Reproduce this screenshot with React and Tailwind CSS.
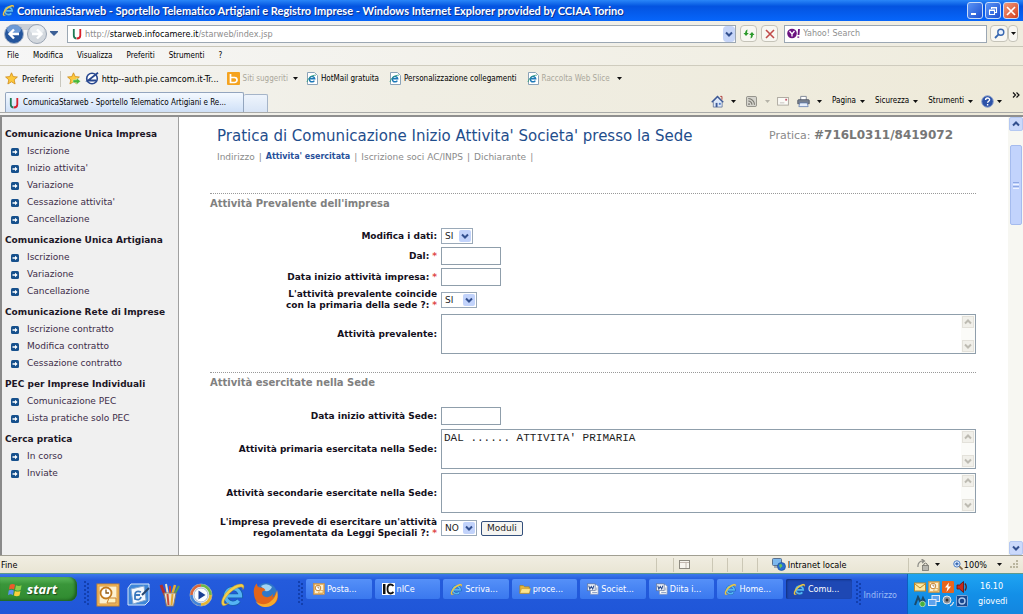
import React from "react";

const ui = "font-['DejaVu_Sans_Condensed','DejaVu_Sans',sans-serif]";

/* ---------- icons ---------- */

function IELogo({ className }) {
  return (
    <svg viewBox="0 0 24 24" className={className} aria-hidden="true">
      <path d="M6.500 12.800H19A6.800 6.800 0 1 0 17.300 17.300" fill="none" stroke="#1560ab" strokeWidth="4.600" />
      <path d="M6.500 12.800H18.800A6.800 6.800 0 1 0 17.200 17.200" fill="none" stroke="#55b4f4" strokeWidth="3.200" />
      <path d="M2.300 21.500C-.5 18.500 4 9.500 11 5c5.500-3.600 10.500-4 11-1.300.2 1-.2 2.200-.9 3.300.2-1.600-.3-2.500-2-2.400-2.600.1-6.300 2-9.600 5.200C5 14 2.700 18.500 4.200 19.900c.7.700 2.300.3 4-.6-2.300 2-4.800 3.200-5.900 2.200z" fill="#f3cf4a" stroke="#c2941c" strokeWidth=".4" />
    </svg>
  );
}

function UMark() {
  return (
    <svg viewBox="0 0 10 12" className="h-3 w-2.5 shrink-0" aria-hidden="true">
      <path d="M1.800 1v6.500c0 2 .8 2.800 2.600 3" fill="none" stroke="#1f7a55" strokeWidth="1.800" />
      <path d="M8.300 1v6.500c0 2-1.200 3-3.600 3" fill="none" stroke="#d8202b" strokeWidth="1.800" />
    </svg>
  );
}

function Caret({ dim }) {
  return (
    <svg viewBox="0 0 5 3" className="h-[3px] w-[5px] shrink-0" aria-hidden="true">
      <path d="M0 0h5L2.500 3z" fill={dim ? "#b5b3a8" : "#111"} />
    </svg>
  );
}

function Star({ arrow }) {
  return (
    <svg viewBox="0 0 14 13" className="h-[13px] w-3.5 shrink-0" aria-hidden="true">
      <path d="M6.500.8l1.700 3.800 4.200.4-3.200 2.800.9 4.200-3.600-2.200L2.900 12l.9-4.200L.6 5l4.200-.4z" fill="#fdc93c" stroke="#cf8a17" strokeWidth=".8" />
      {arrow && <path d="M6 7.800h3.600V6l4 3.300-4 3.300v-1.900H6z" fill="#46b838" stroke="#fff" strokeWidth=".4" />}
    </svg>
  );
}

function PageIcon() {
  return (
    <svg viewBox="0 0 12 13" className="h-[13px] w-3 shrink-0" aria-hidden="true">
      <path d="M1.500.5h7l3 3v9h-10z" fill="#fff" stroke="#8ba3b8" />
      <path d="M8.300 8.600A2.700 2.700 0 1 1 8.700 6.800H4" fill="none" stroke="#1c78b8" strokeWidth="1.500" />
      <path d="M1 10C2 6 6 3 9.800 3.200" fill="none" stroke="#2e9a78" strokeWidth=".9" />
    </svg>
  );
}

function Chevron({ up, color = "#33508f" }) {
  return (
    <svg viewBox="0 0 8 6" className="h-1.5 w-2" aria-hidden="true">
      <path d={up ? "M1 4.500l3-3 3 3" : "M1 1.500l3 3 3-3"} fill="none" stroke={color} strokeWidth="2" />
    </svg>
  );
}

function Bullet() {
  return (
    <svg viewBox="0 0 8 8" className="h-2 w-2 shrink-0" aria-hidden="true">
      <rect width="8" height="8" rx="1.500" fill="#16508c" />
      <path d="M1.500 3.300H4V1.800L6.600 4 4 6.200V4.700H1.500z" fill="#fff" />
    </svg>
  );
}

function Outlook({ className }) {
  return (
    <svg viewBox="0 0 24 24" className={className} aria-hidden="true">
      <rect x="1" y="1" width="22" height="22" fill="#f6c468" stroke="#c9822a" />
      <rect x="3" y="3" width="18" height="18" fill="#fdf0cf" stroke="#dd9a3c" />
      <circle cx="10" cy="10" r="5.500" fill="#fff" stroke="#c27a1f" strokeWidth="1.800" />
      <path d="M10 6.500V10h3" fill="none" stroke="#8a5716" strokeWidth="1.300" />
      <path d="M13 15h7v5h-9z" fill="#fff2c0" stroke="#c9822a" />
    </svg>
  );
}

function Word() {
  return (
    <svg viewBox="0 0 14 14" className="h-3 w-3 shrink-0" aria-hidden="true">
      <path d="M4 2h7l2 2v9H4z" fill="#fff" stroke="#8090b0" strokeWidth=".8" />
      <path d="M10.500 6H12M10.500 8H12M6 11h6" stroke="#5572a8" strokeWidth=".8" />
      <rect x=".5" y="1" width="9" height="8" fill="#eef3fb" stroke="#5a6f98" strokeWidth=".8" />
      <path d="M2 3l1.300 4L5 4l1.700 3L8 3" fill="none" stroke="#27498c" strokeWidth="1.200" />
    </svg>
  );
}

function Folder() {
  return (
    <svg viewBox="0 0 14 14" className="h-3 w-3 shrink-0" aria-hidden="true">
      <path d="M1 3h4l1.500 1.500H12V12H1z" fill="#e7b73c" stroke="#a87a16" strokeWidth=".7" />
      <path d="M3 6.500h10.500L12 12H1z" fill="#fde58c" stroke="#b98e25" strokeWidth=".6" />
    </svg>
  );
}

function Nice() {
  return (
    <svg viewBox="0 0 13 12" className="h-3 w-[13px] shrink-0" aria-hidden="true">
      <rect width="13" height="12" fill="#fff" />
      <rect x="1" y="1" width="2.500" height="10" fill="#111" />
      <path d="M11.500 3C10.500 1.800 9.500 1.500 8.500 1.500 6.500 1.500 5.500 3.300 5.500 6s1 4.500 3 4.500c1 0 2-.5 3-1.500" fill="none" stroke="#111" strokeWidth="1.800" />
    </svg>
  );
}

function Grip() {
  return (
    <svg viewBox="0 0 6 26" className="h-[26px] w-1.5 shrink-0" aria-hidden="true">
      {[1, 5, 9, 13, 17, 21].map((y) => (
        <g key={y} fill="#123fae">
          <rect x="0" y={y} width="2" height="2" />
          <rect x="3" y={y + 2} width="2" height="2" />
        </g>
      ))}
    </svg>
  );
}

/* ---------- browser chrome ---------- */

function TitleBar() {
  const box = "flex h-[17px] w-4 items-center justify-center rounded-[3px] border border-[#c9dcf8]";
  return (
    <header className="flex h-[21px] items-center bg-linear-to-b from-[#2a86f8] via-[#0453e0] via-30% to-[#0766fb] pr-1 pl-0.5">
      <IELogo className="h-[13px] w-[13px] shrink-0" />
      <h1 className="ml-0.5 flex-1 truncate font-['Lato','Open_Sans',sans-serif] text-[11px] leading-4 font-bold text-white [text-shadow:1px_1px_0_#0a2f8c]">
        ComunicaStarweb - Sportello Telematico Artigiani e Registro Imprese - Windows Internet Explorer provided by CCIAA Torino
      </h1>
      <div className="flex gap-0.5">
        <button aria-label="Riduci a icona" className={`${box} bg-linear-to-br from-[#5a93f5] to-[#1f4fd0]`}>
          <svg viewBox="0 0 10 10" className="h-2.5 w-2.5"><path d="M1 8h5" stroke="#fff" strokeWidth="2" /></svg>
        </button>
        <button aria-label="Ripristina" className={`${box} bg-linear-to-br from-[#5a93f5] to-[#1f4fd0]`}>
          <svg viewBox="0 0 10 10" className="h-2.5 w-2.5"><path d="M3.500 3V1.500h5v5H7M1.500 4h5v4.500h-5zM1.500 4.500h5M3.500 2h5" fill="none" stroke="#fff" strokeWidth="1.100" /></svg>
        </button>
        <button aria-label="Chiudi" className={`${box} bg-linear-to-br from-[#f09a7c] to-[#d23a14]`}>
          <svg viewBox="0 0 10 10" className="h-2.5 w-2.5"><path d="M1 1l8 8M9 1L1 9" stroke="#fff" strokeWidth="1.700" /></svg>
        </button>
      </div>
    </header>
  );
}

function NavRow() {
  const btn = "flex h-[17px] items-center justify-center rounded-sm border border-[#c5c3b8] bg-[#f8f7f2]";
  return (
    <div className="flex h-[26px] items-center border-b border-[#c9c6b8] bg-linear-to-r from-[#f4f4f5] to-[#efecdf] pr-[5px] pl-1">
      <svg viewBox="0 0 46 22" className="h-[22px] w-[46px] shrink-0" role="img" aria-label="Indietro e avanti">
        <path d="M10 1h25v6H10z" fill="#c9ced6" />
        <circle cx="10" cy="11" r="9.500" fill="#24559d" stroke="#a9b6c9" />
        <ellipse cx="10" cy="6.500" rx="7" ry="4.500" fill="#6d9ad6" />
        <path d="M15 11H6M10 6.500L5.500 11l4.500 4.500" fill="none" stroke="#fff" strokeWidth="2.400" />
        <circle cx="33" cy="11" r="9.500" fill="#d3d8de" stroke="#9aa4b3" />
        <ellipse cx="33" cy="7" rx="7" ry="4.500" fill="#e6eaee" />
        <path d="M28 11h9M33 6.500l4.500 4.500-4.500 4.500" fill="none" stroke="#fff" strokeWidth="2.400" />
      </svg>
      <svg viewBox="0 0 8 5" className="h-[5px] w-2 shrink-0"><path d="M0 0h8v1L4 5 0 1z" fill="#3c5f96" /></svg>
      <div className="ml-[9px] flex h-[18px] flex-1 items-center border border-[#9ba7b3] bg-white pl-1">
        <UMark />
        <div role="textbox" aria-label="Indirizzo" tabIndex={0} className={`${ui} ml-[3px] flex-1 text-[9px] leading-3 text-[#8c8c8c]`}>
          http://<span className="text-black">starweb.infocamere.it</span>/starweb/index.jsp
        </div>
        <button aria-label="Cronologia indirizzi" className="flex h-4 w-3 items-center justify-center rounded-sm bg-[#c6d5f8]"><Chevron /></button>
      </div>
      <button aria-label="Aggiorna" className={`${btn} ml-1 w-[17px]`}>
        <svg viewBox="0 0 12 10" className="h-2.5 w-3"><path d="M4.500.5L4 4h1.800L3 7 .5 4h1.600C2 2.500 3 1 4.500.5zM7.500 9.500L8 6H6.200L9 3l2.500 3H9.900C10 7.500 9 9 7.500 9.500z" fill="#2c9a2c" /></svg>
      </button>
      <button aria-label="Interrompi" className={`${btn} ml-1 w-[17px]`}>
        <svg viewBox="0 0 10 10" className="h-2.5 w-2.5"><path d="M1 1l8 8M9 1L1 9" stroke="#c04a4a" strokeWidth="1.600" /></svg>
      </button>
      <div className="ml-1.5 flex h-[18px] w-1/5 items-center border border-[#9ba7b3] bg-white pl-0.5">
        <svg viewBox="0 0 14 11" className="h-[11px] w-3.5 shrink-0">
          <circle cx="5" cy="5.500" r="4.800" fill="#6b1280" />
          <path d="M2.500 3L5 6l2.500-3M5 6v2.500" fill="none" stroke="#fff" strokeWidth="1.300" />
          <path d="M12 1l-.5 6M11.300 8.500v1.300" stroke="#6b1280" strokeWidth="1.800" />
        </svg>
        <input aria-label="Cerca" placeholder="Yahoo! Search" className="ml-0.5 w-full min-w-0 font-['DejaVu_Sans',sans-serif] text-[8px] leading-3 outline-none placeholder:text-[#8f8f8f]" />
      </div>
      <button aria-label="Avvia ricerca" className={`${btn} ml-[3px] w-[18px]`}>
        <svg viewBox="0 0 11 11" className="h-[11px] w-[11px]"><circle cx="6.800" cy="4.200" r="3" fill="#eaf2fd" stroke="#3767b0" strokeWidth="1.400" /><path d="M4.600 6.400L1 10" stroke="#3767b0" strokeWidth="1.800" /></svg>
      </button>
      <button aria-label="Opzioni di ricerca" className={`${btn} w-2.5`}><Caret /></button>
    </div>
  );
}

function MenuRow() {
  return (
    <nav className={`${ui} flex h-[19px] items-center gap-3.5 border-b border-[#cfccbe] bg-linear-to-r from-[#f6f6f6] to-[#efecdd] pl-[7px] text-[8px] leading-3 text-black`}>
      {["File", "Modifica", "Visualizza", "Preferiti", "Strumenti", "?"].map((m) => <button key={m}>{m}</button>)}
    </nav>
  );
}

function FavoritesRow() {
  const item = "flex shrink-0 items-center gap-[3px]";
  return (
    <div className={`${ui} flex h-[25px] items-center pl-[5px] text-[8px] leading-3 text-black`}>
      <button className={`${item} text-[9px]`}><Star />Preferiti</button>
      <span className="mx-1.5 h-4 w-px bg-[#c9c7bd]" />
      <button aria-label="Aggiungi alla barra Preferiti"><Star arrow /></button>
      <a href="#auth" className={`${item} ml-1`}>
        <svg viewBox="0 0 14 13" className="h-[13px] w-3.5"><circle cx="7" cy="6.500" r="5.300" fill="#fff" stroke="#27478f" strokeWidth="1.600" /><path d="M13 .8L3 8.500h8" fill="none" stroke="#27478f" strokeWidth="1.800" /></svg>
        <span className="text-[9px]">http--auth.pie.camcom.it-Tr...</span>
      </a>
      <a href="#siti" className={`${item} ml-2 text-[#aaa79b]`}>
        <svg viewBox="0 0 13 13" className="h-[13px] w-[13px]"><rect width="13" height="13" rx="1" fill="#f5a31f" /><path d="M3.500 2v8.500h4a2.500 2.500 0 0 0 0-5h-4" fill="none" stroke="#fff" strokeWidth="1.700" /></svg>
        Siti suggeriti<span className="ml-0.5"><Caret /></span>
      </a>
      <a href="#hotmail" className={`${item} ml-2`}><PageIcon />HotMail gratuita</a>
      <a href="#pers" className={`${item} ml-2.5`}><PageIcon />Personalizzazione collegamenti</a>
      <a href="#slice" className={`${item} ml-2.5 text-[#aaa79b]`}><PageIcon />Raccolta Web Slice<span className="ml-1"><Caret /></span></a>
    </div>
  );
}

function TabRow() {
  const item = "flex items-center gap-1";
  return (
    <div className={`${ui} flex h-[22px] items-end border-b border-[#a9aaa8] pl-[5px] text-[8px] leading-3 text-black`}>
      <button className="flex h-5 w-[239px] items-center gap-1 rounded-t-xs border border-b-0 border-[#93a5be] bg-linear-to-b from-[#f4f9ff] to-[#cfe0f7] pl-[3px] whitespace-nowrap">
        <UMark />ComunicaStarweb - Sportello Telematico Artigiani e Re...
      </button>
      <button aria-label="Nuova scheda" className="h-[18px] w-6 rounded-t-xs border border-b-0 border-l-0 border-[#a5b4c8] bg-linear-to-b from-[#eef4fc] to-[#d9e5f6]" />
      <div className="ml-auto flex h-[22px] items-center pr-[3px]">
        <button aria-label="Pagina iniziale" className="mr-2.5 flex items-center gap-[7px]">
          <svg viewBox="0 0 14 14" className="h-[13px] w-[13px]"><path d="M2.500 7v6h9.500V7L7 2z" fill="#dde8f8" stroke="#566a92" strokeWidth=".8" /><path d="M.8 7.800L7 1.500l6.200 6.300" fill="none" stroke="#3d5996" strokeWidth="1.500" /><path d="M10 1.500h1.800V5" fill="none" stroke="#a33" strokeWidth="1" /><path d="M5 8.500h2V13H5z" fill="#3d5996" /><path d="M8.500 8.500h2v2h-2z" fill="#4d79c8" /></svg>
          <Caret />
        </button>
        <button aria-label="Feed" className="mr-[7px] flex items-center gap-2">
          <svg viewBox="0 0 12 12" className="h-[11px] w-[11px]"><rect x=".5" y=".5" width="11" height="11" rx="1.500" fill="#d5d4cd" stroke="#8b8a83" /><circle cx="3.300" cy="8.800" r="1" fill="#77766f" /><path d="M2.500 5.500a4 4 0 0 1 4 4M2.500 2.800a6.800 6.800 0 0 1 6.800 6.700" fill="none" stroke="#77766f" strokeWidth="1.200" /></svg>
          <Caret dim />
        </button>
        <button aria-label="Leggi posta" className="mr-2">
          <svg viewBox="0 0 13 10" className="h-[9px] w-3"><rect x=".5" y=".5" width="12" height="8.500" fill="#fbfaf6" stroke="#a9a59c" /><rect x="9" y="2" width="2" height="2" fill="#c4566a" /><path d="M3 6.500h5" stroke="#c3c0ba" /></svg>
        </button>
        <button aria-label="Stampa" className="mr-2.5 flex items-center gap-[7px]">
          <svg viewBox="0 0 14 13" className="h-[13px] w-[13px]"><path d="M4 5V1h6v4" fill="#fff" stroke="#7c8494" /><path d="M.8 5.500q0-1 1-1h10.400q1 0 1 1V9H.8z" fill="#77808f" stroke="#454d5c" strokeWidth=".8" /><path d="M3 8h8l1 4H2z" fill="#e6eefb" stroke="#5c78ad" strokeWidth=".8" /></svg>
          <Caret />
        </button>
        <div className="mr-2 flex gap-2.5">
          {["Pagina", "Sicurezza", "Strumenti"].map((t) => <button key={t} className={item}>{t}<Caret /></button>)}
        </div>
        <button aria-label="Guida" className="mr-2.5 flex items-center gap-[3px]">
          <svg viewBox="0 0 13 13" className="h-[13px] w-[13px]"><circle cx="6.500" cy="6.500" r="5.800" fill="#2c52a8" stroke="#8fa3cc" /><path d="M4.600 5c0-2.600 4-2.500 4-.2 0 1.500-2 1.500-2 3M6.600 9v1.400" fill="none" stroke="#fff" strokeWidth="1.400" /></svg>
          <Caret />
        </button>
        <button aria-label="Altri comandi" className="self-start">
          <svg viewBox="0 0 8 6" className="mt-0.5 h-1.5 w-2"><path d="M1 .5L3.500 3 1 5.500M4.500.5L7 3 4.500 5.500" fill="none" stroke="#111" strokeWidth="1.200" /></svg>
        </button>
      </div>
    </div>
  );
}

/* ---------- page ---------- */

const MENU = [
  ["Comunicazione Unica Impresa", ["Iscrizione", "Inizio attivita'", "Variazione", "Cessazione attivita'", "Cancellazione"]],
  ["Comunicazione Unica Artigiana", ["Iscrizione", "Variazione", "Cancellazione"]],
  ["Comunicazione Rete di Imprese", ["Iscrizione contratto", "Modifica contratto", "Cessazione contratto"]],
  ["PEC per Imprese Individuali", ["Comunicazione PEC", "Lista pratiche solo PEC"]],
  ["Cerca pratica", ["In corso", "Inviate"]],
];

function Sidebar() {
  return (
    <aside className="w-[179px] shrink-0 border-r border-l-2 border-r-[#a0a0a0] border-l-[#8a8a8a] bg-[#f0f0f0] pt-[9px] pl-[3px] text-[9px] leading-[17px]">
      {MENU.map(([title, items]) => (
        <section key={title} className="mb-1">
          <h2 className="font-bold whitespace-nowrap text-[#1c1626]">{title}</h2>
          <ul>
            {items.map((t) => (
              <li key={t}><a href="#pratica" className="flex items-center gap-2 pl-1.5 text-[#3c2c48]"><Bullet />{t}</a></li>
            ))}
          </ul>
        </section>
      ))}
    </aside>
  );
}

function Row({ id, label, required, children }) {
  const lines = label.split("\n");
  return (
    <div className="flex items-center gap-1">
      <label htmlFor={id} className="flex w-[227px] shrink-0 flex-col items-end text-[9px] leading-[11px] font-bold text-[#14101c]">
        {lines.map((line, i) => (
          <span key={line} className="flex gap-[3px]">
            <span>{line}</span>
            {required && i === lines.length - 1 && <span className="text-[#e04848]">*</span>}
          </span>
        ))}
      </label>
      {children}
    </div>
  );
}

function Select({ id, value, wide }) {
  return (
    <div className={`relative h-4 ${wide ? "w-9" : "w-8"}`}>
      <select id={id} defaultValue={value} className="block h-full w-full appearance-none border border-[#9aa9b8] bg-white pl-[3px] text-[9px] leading-3 text-[#222]">
        <option>SI</option>
        <option>NO</option>
      </select>
      <span className="pointer-events-none absolute top-0.5 right-0.5 flex h-3 w-3 items-center justify-center rounded-xs bg-[#c2d3fb]"><Chevron /></span>
    </div>
  );
}

function DateInput({ id }) {
  return <input id={id} className="h-[18px] w-[60px] border border-[#8f9eab] bg-white px-0.5 text-[9px]" />;
}

function Area({ id, value = "" }) {
  const arrow = "flex h-3 w-3 items-center justify-center border border-[#e3e1da] bg-[#f1f0ea]";
  return (
    <div className="flex h-10 flex-1 border border-[#8f9eab] bg-white">
      <textarea id={id} defaultValue={value} className="flex-1 resize-none overflow-hidden px-0.5 pt-0.5 font-['Liberation_Mono',monospace] text-[11px] leading-3 text-[#222]" />
      <div className="flex flex-col justify-between bg-[#fbfbf8] p-px">
        <span className={arrow}><Chevron up color="#bdbbb2" /></span>
        <span className={arrow}><Chevron color="#bdbbb2" /></span>
      </div>
    </div>
  );
}

function Section({ title, children }) {
  return (
    <section className="border-t border-dotted border-[#999]">
      <h3 className="text-[10px] leading-5 font-bold text-[#808080]">{title}</h3>
      {children}
    </section>
  );
}

function Scrollbar() {
  const b = "flex h-[14px] w-3.5 items-center justify-center rounded-xs border border-[#b4c8f2] bg-[#cbd9fb]";
  return (
    <div className="flex w-[15px] shrink-0 flex-col items-center bg-[#f7f7f2]">
      <button aria-label="Scorri su" className={b}><Chevron up /></button>
      <div className="mt-3.5 flex h-20 w-3 flex-col items-center justify-center gap-px rounded-xs border border-[#a5bbee] bg-[#c2d3fc]">
        <span className="h-px w-1.5 bg-[#8ea8e4]" />
        <span className="h-px w-1.5 bg-[#eef3ff]" />
        <span className="h-px w-1.5 bg-[#8ea8e4]" />
        <span className="h-px w-1.5 bg-[#eef3ff]" />
      </div>
      <button aria-label="Scorri giù" className={`${b} mt-auto`}><Chevron /></button>
    </div>
  );
}

function Page() {
  return (
    <div className="flex flex-1 border-t-2 border-[#8f8f8f] bg-white font-['DejaVu_Sans',sans-serif]">
      <Sidebar />
      <main className="flex-1 pt-2 pr-8 pb-4 pl-[31px]">
        <div className="flex items-center justify-between pr-[23px] pl-[7px] whitespace-nowrap">
          <h2 className="text-[15px] leading-5 text-[#1f4e8c]">Pratica di Comunicazione Inizio Attivita' Societa' presso la Sede</h2>
          <p className="text-[11px] leading-5 text-[#8a8a8a]">Pratica: <b className="text-[12px] text-[#777]">#716L0311/8419072</b></p>
        </div>
        <nav className="mt-[5px] mb-[30px] flex gap-1 pl-[7px] text-[9px] leading-3 text-[#8a8a8a]">
          <a href="#indirizzo">Indirizzo</a>|
          <a href="#attivita" className="text-[8px] font-bold text-[#27509a]">Attivita' esercitata</a>|
          <a href="#soci">Iscrizione soci AC/INPS</a>|
          <a href="#dichiarante">Dichiarante</a>|
        </nav>
        <Section title="Attività Prevalente dell'impresa">
          <div className="mt-3.5 mb-[18px] flex flex-col gap-[3px]">
            <Row id="mod" label="Modifica i dati:"><Select id="mod" value="SI" /></Row>
            <Row id="dal" label="Dal:" required><DateInput id="dal" /></Row>
            <Row id="inizio" label="Data inizio attività impresa:" required><DateInput id="inizio" /></Row>
            <Row id="coincide" label={"L'attività prevalente coincide\ncon la primaria della sede ?:"} required><Select id="coincide" value="SI" wide /></Row>
            <Row id="prev" label="Attività prevalente:"><Area id="prev" /></Row>
          </div>
        </Section>
        <Section title="Attività esercitate nella Sede">
          <div className="mt-3.5 flex flex-col gap-1">
            <Row id="sede" label="Data inizio attività Sede:"><DateInput id="sede" /></Row>
            <Row id="prim" label="Attività primaria esercitata nella Sede:"><Area id="prim" value="DAL ...... ATTIVITA' PRIMARIA" /></Row>
            <Row id="sec" label="Attività secondarie esercitate nella Sede:"><Area id="sec" /></Row>
            <Row id="leggi" label={"L'impresa prevede di esercitare un'attività\nregolamentata da Leggi Speciali ?:"} required>
              <Select id="leggi" value="NO" wide />
              <button className="h-[15px] rounded-xs border border-[#34507c] bg-[#f5f5f2] px-[5px] text-[9px] leading-3 text-[#222]">Moduli</button>
            </Row>
          </div>
        </Section>
      </main>
      <Scrollbar />
    </div>
  );
}

/* ---------- bottom bars ---------- */

function StatusBar() {
  const sep = "h-3.5 w-px bg-[#cbc7b5]";
  return (
    <div className={`${ui} flex h-[18px] items-center border-t border-[#a19f92] bg-linear-to-b from-[#f1eee2] to-[#e9e5d4] pr-1 pl-px text-[9px] leading-3 text-black`}>
      <span className="flex-1">Fine</span>
      <span className={sep} />
      <span className={`${sep} ml-4`} />
      <svg viewBox="0 0 11 9" className="ml-[5px] h-[9px] w-[11px]"><rect x=".5" y=".5" width="10" height="8" fill="#f7f5ee" stroke="#8e8b80" /><path d="M1 2.500h9M7 3v5" stroke="#b5a9a0" strokeWidth=".8" /></svg>
      <span className={`${sep} ml-[22px]`} />
      <span className={`${sep} ml-3.5`} />
      <span className={`${sep} ml-3.5`} />
      <span className={`${sep} ml-3.5`} />
      <svg viewBox="0 0 14 13" className="mr-0.5 ml-3.5 h-[13px] w-3.5"><rect x=".5" y=".5" width="9" height="7" rx="1" fill="#7db8ee" stroke="#59708f" /><path d="M2 9h6" stroke="#8795a8" strokeWidth="1.500" /><circle cx="9.500" cy="8.500" r="4" fill="#2a6fd0" stroke="#154a96" strokeWidth=".6" /><path d="M7 7q2-2 3 0t-1 2q0 2-1 1z" fill="#65c45a" /></svg>
      <span className="w-[120px]">Intranet locale</span>
      <span className={sep} />
      <button aria-label="Modalità protetta" className="ml-2 flex items-center gap-[5px]">
        <svg viewBox="0 0 13 12" className="h-3 w-[13px]"><path d="M1 8c-.5-4 2-6.500 6-6M4.500 0L7.500 2 5 4" fill="none" stroke="#8b8b85" strokeWidth="1.200" /><rect x="5.500" y="6.500" width="6" height="5" fill="#b7b6af" stroke="#77766f" strokeWidth=".8" /><path d="M6.800 6.500V5q1.700-1.800 3.400 0v1.500" fill="none" stroke="#77766f" /></svg>
        <Caret />
      </button>
      <button className="ml-[13px] flex items-center gap-px">
        <svg viewBox="0 0 11 11" className="h-2.5 w-2.5"><circle cx="4.300" cy="4.300" r="3.500" fill="#e3f0fd" stroke="#3a6fc0" /><path d="M2.500 4.300h3.600M4.300 2.500v3.600" stroke="#2457a8" strokeWidth="1.200" /><path d="M7 7l3.500 3.500" stroke="#846a4a" strokeWidth="1.800" /></svg>
        100%<span className="ml-[9px]"><Caret /></span>
      </button>
      <svg viewBox="0 0 9 9" className="ml-2 h-[9px] w-[9px]"><path d="M6 0h2v2H6zM3 3h2v2H3zM6 3h2v2H6zM0 6h2v2H0zM3 6h2v2H3zM6 6h2v2H6z" fill="#bab69f" /></svg>
    </div>
  );
}

const TASKS = [
  ["Posta...", <Outlook className="h-3 w-3 shrink-0" />],
  ["nICe", <Nice />],
  ["Scriva...", <IELogo className="h-[13px] w-[13px] shrink-0" />],
  ["proce...", <Folder />],
  ["Societ...", <Word />],
  ["Diita i...", <Word />],
  ["Home...", <IELogo className="h-[13px] w-[13px] shrink-0" />],
  ["Comu...", <IELogo className="h-[13px] w-[13px] shrink-0" />],
];

function QuickLaunch() {
  return (
    <div className="mt-2 mr-[19px] ml-1.5 flex gap-[7px]">
      <button aria-label="Outlook"><Outlook className="h-6 w-6" /></button>
      <button aria-label="Mostra desktop">
        <svg viewBox="0 0 24 24" className="h-6 w-6"><path d="M4 1h18v17l-4 4H1V5z" fill="#3f87d8" stroke="#d8e8fa" /><path d="M4 6l13-3 2 14-13 4z" fill="#f4f8fd" stroke="#86a8d0" /><path d="M14 9q-6-2-6 3v4q5 2 6-2M8 12h5" fill="none" stroke="#3a78bd" strokeWidth="1.800" /><path d="M22 5l-7 7" stroke="#26456e" strokeWidth="2" /></svg>
      </button>
      <button aria-label="Grafica">
        <svg viewBox="0 0 24 24" className="h-6 w-6"><path d="M7 12L3 2" stroke="#b03030" strokeWidth="3" /><path d="M10 12L8 1" stroke="#e8e0c8" strokeWidth="2" /><path d="M12 12V3" stroke="#d03a2a" strokeWidth="2" /><path d="M14 12l3-10" stroke="#e8b030" strokeWidth="2.500" /><path d="M16 12l5-9" stroke="#58a048" strokeWidth="2" /><path d="M6 10h12l-2.500 13h-7z" fill="#e8dfd0" stroke="#8d7a60" /><path d="M9.500 11l1 11" stroke="#c84a36" strokeWidth="2" /><path d="M14.500 11l-1 11" stroke="#e3a72d" strokeWidth="2" /></svg>
      </button>
      <button aria-label="Lettore multimediale">
        <svg viewBox="0 0 24 24" className="h-6 w-6"><circle cx="12" cy="12" r="11" fill="#e9edf3" stroke="#8f9fb8" /><path d="M12 2.500A9.500 9.500 0 0 1 21.500 12" fill="none" stroke="#6fb848" strokeWidth="2.500" /><path d="M21.500 12A9.500 9.500 0 0 1 12 21.500" fill="none" stroke="#e7b531" strokeWidth="2.500" /><path d="M12 21.500A9.500 9.500 0 0 1 2.500 12" fill="none" stroke="#4385d8" strokeWidth="2.500" /><path d="M2.500 12A9.500 9.500 0 0 1 12 2.500" fill="none" stroke="#d9663c" strokeWidth="2.500" /><circle cx="12" cy="12" r="7" fill="#fafcff" stroke="#a9b8cf" /><path d="M9.500 7.500v9l7-4.500z" fill="#1b3f93" /></svg>
      </button>
      <button aria-label="Internet Explorer"><IELogo className="h-[26px] w-[26px]" /></button>
      <button aria-label="Firefox">
        <svg viewBox="0 0 26 26" className="h-[26px] w-[26px]"><circle cx="13" cy="12" r="11" fill="#2f78c8" /><path d="M8 4q6-4 11 1-2 5-7 4z" fill="#a5d5f2" /><path d="M1 12C0 7 2 3 4 1.500 4 4 5 5.500 7.500 5.500q4 0 5 3-3.500 0-3.500 2.500 0 3 4 4 4 1 7-3 0 2-1 3.500 3-1 4-6c2 4 2 7 1 9-2 4-6 5.500-11 5.500C6 24 1.500 19 1 12z" fill="#e2651a" /><path d="M24 8c2.500 8-2 17-11 17-5 0-8-2-10.500-6 5 4.500 11 4 15 .5 4-3 5.500-6 6.500-11.500z" fill="#f6a92c" /></svg>
      </button>
    </div>
  );
}

function Tray() {
  const ic = "h-3 w-3";
  return (
    <div className="flex h-full w-[116px] shrink-0 items-center border-l border-[#0c5fc0] bg-linear-to-b from-[#1fa4f2] via-[#1390e8] to-[#1386df] pl-1.5 text-[8px] text-white">
      <div className="grid grid-cols-4 gap-0.5">
        <svg viewBox="0 0 12 12" className={ic}><rect x=".5" y="2" width="11" height="8" fill="#fbe9a0" stroke="#b9872a" /><path d="M1 3l5 4 5-4" fill="none" stroke="#b9872a" /></svg>
        <Outlook className={ic} />
        <svg viewBox="0 0 12 12" className={ic}><rect width="12" height="12" rx="1" fill="#e8651c" /><path d="M7 1.500L3 6.500h2.500L4.500 11 9 5.500H6.300z" fill="#fff" /></svg>
        <svg viewBox="0 0 12 12" className={ic}><path d="M1 4h2.500L7.500.5v11L3.500 8H1z" fill="#c8281c" stroke="#601008" strokeWidth=".8" /><path d="M9 2.500q2.500 3.500 0 7" fill="none" stroke="#5a2018" strokeWidth="1.300" /></svg>
        <svg viewBox="0 0 12 12" className={ic}><path d="M1 10l3-8 3 6 2-5 2 4" fill="none" stroke="#1b4a6b" strokeWidth="2" /><circle cx="8.500" cy="9" r="2.800" fill="#48b03c" stroke="#e6f5e0" strokeWidth=".6" /></svg>
        <svg viewBox="0 0 12 12" className={ic}><rect x="4" y=".5" width="7.500" height="6" fill="#5fa2ec" stroke="#dfe9f5" /><rect x=".5" y="4.500" width="7.500" height="6" fill="#5fa2ec" stroke="#dfe9f5" /></svg>
        <svg viewBox="0 0 12 12" className={ic}><circle cx="5" cy="5" r="4" fill="#8d939c" stroke="#e4e6ea" /><circle cx="5" cy="5" r="1.500" fill="#333" /><path d="M8 11q3-1 3.500-4" fill="none" stroke="#e4e6ea" strokeWidth="1.200" /></svg>
        <svg viewBox="0 0 12 12" className={ic}><rect x=".5" y=".5" width="11" height="11" rx="1" fill="#17468e" stroke="#7fa6d8" /><circle cx="6" cy="6" r="3" fill="none" stroke="#a9c8ee" strokeWidth="1.400" /></svg>
      </div>
      <div className={`${ui} flex-1 pl-2 text-[9px] leading-[15px]`}>
        <p className="pl-1">16.10</p>
        <p className="pl-0.5">giovedì</p>
      </div>
    </div>
  );
}

function Taskbar() {
  return (
    <footer className="flex h-[41px] items-start border-t border-[#5f9a8c] bg-linear-to-b from-[#3b78ec] via-[#245bdc] via-15% to-[#1f56d8]">
      <button className="mt-[3px] flex h-6 w-[77px] shrink-0 items-center gap-1 rounded-r-lg bg-linear-to-b from-[#5cb85c] via-[#3a963a] via-30% to-[#2f8a2f] pl-2 shadow-[inset_-2px_-1px_3px_#1d5c1f]">
        <svg viewBox="0 0 16 16" className="h-[15px] w-[15px]">
          <path d="M2 3q3-2 5.500 0l-1 5Q4 6.500 1 8z" fill="#ee5a2c" />
          <path d="M8.500 3.500q3 1.500 6 0l-1 5q-3 1.500-6 0z" fill="#8bd04a" />
          <path d="M.8 9q3-1.500 5.500 0l-1 5q-2.500-2-5.300 0z" fill="#5b93f0" />
          <path d="M7.300 9.500q3 1.500 6 0l-1 5q-3 1.500-6 0z" fill="#fbd13a" />
        </svg>
        <span className="font-['Open_Sans',sans-serif] text-[13px] leading-4 font-bold text-white italic [text-shadow:1px_1px_1px_#1d4a1d]">start</span>
      </button>
      <div className="mt-1.5 ml-[7px]"><Grip /></div>
      <QuickLaunch />
      <div className="mt-1.5 mr-0.5"><Grip /></div>
      <div className="mt-[5px] flex flex-1 gap-[3px]">
        {TASKS.map(([t, icon], i) => (
          <button
            key={t}
            className={`${ui} flex h-5 min-w-0 flex-1 items-center gap-0.5 rounded-xs pl-[7px] text-[9px] leading-3 whitespace-nowrap text-white ${
              i === TASKS.length - 1 ? "bg-[#1e48b4] shadow-[inset_1px_1px_2px_#12307e]" : "bg-linear-to-b from-[#5590f8] to-[#3a78ee]"
            }`}
          >
            {icon}{t}
          </button>
        ))}
      </div>
      <div className="mt-1.5 ml-[5px]"><Grip /></div>
      <span className="mt-4 mr-2.5 ml-px font-['DejaVu_Sans',sans-serif] text-[8px] leading-3 text-[#9dbcf5]">Indirizzo</span>
      <Tray />
    </footer>
  );
}

export default function App() {
  return (
    <div className="flex min-h-screen flex-col">
      <TitleBar />
      <NavRow />
      <MenuRow />
      <div className="bg-linear-to-r from-[#f4f4f3] via-[#f0eee4] via-40% to-[#eeead9] pb-0.5">
        <FavoritesRow />
        <TabRow />
      </div>
      <Page />
      <StatusBar />
      <Taskbar />
    </div>
  );
}
